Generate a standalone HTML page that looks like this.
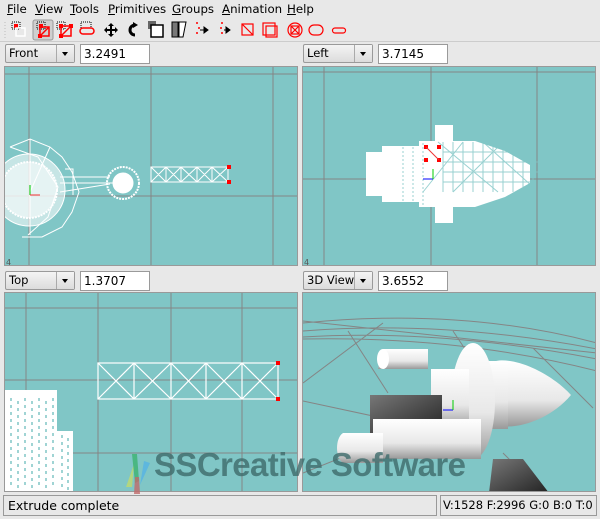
<!DOCTYPE html>
<html><head><style>
body{margin:0;width:600px;height:519px;background:#e8e8e8;font-family:"DejaVu Sans","Liberation Sans",sans-serif;font-size:12px;color:#000;position:relative;overflow:hidden}
.a{position:absolute}
.menu span{position:absolute;top:0;white-space:nowrap}
.combo{position:absolute;height:19px;border:1px solid #9a9a9a;border-radius:2px;background:linear-gradient(#f4f4f4,#dcdcdc);box-sizing:border-box;font-size:11.5px;line-height:17px;padding-left:3px;white-space:nowrap}
.combo b{position:absolute;right:0;top:0;width:17px;height:17px;border-left:1px solid #aaa;font-weight:normal;background:linear-gradient(#f4f4f4,#dcdcdc)}
.combo b:after{content:"";position:absolute;left:5px;top:7px;border:3px solid transparent;border-top:4px solid #000}
.field{position:absolute;height:20px;border:1px solid #9a9a9a;background:#fff;box-sizing:border-box;font-size:12px;line-height:18px;padding-left:3px}
.vp{position:absolute;background:#80c6c6;border:1px solid #999;box-sizing:border-box;overflow:hidden}
.vp svg{position:absolute;left:0;top:0}
</style></head><body>
<div class="a menu" style="left:0;top:2px;font-size:11.8px;width:400px;height:16px"><span style="left:7px"><u>F</u>ile</span><span style="left:35px"><u>V</u>iew</span><span style="left:70px"><u>T</u>ools</span><span style="left:108px"><u>P</u>rimitives</span><span style="left:172px"><u>G</u>roups</span><span style="left:222px"><u>A</u>nimation</span><span style="left:287px"><u>H</u>elp</span></div>
<svg class="a" style="left:0;top:18px" width="360" height="24">
<g stroke="#bbb"><line x1="5" y1="4" x2="5" y2="20" stroke-dasharray="1 2"/></g>
<rect x="33" y="2" width="20" height="20" fill="#cfcfcf" stroke="#999" rx="2"/>
<g fill="none" stroke="#000" stroke-dasharray="1 1"><rect x="12" y="4" width="8" height="7"/><rect x="37" y="4" width="8" height="7"/><rect x="57" y="4" width="8" height="7"/><rect x="81" y="4" width="10" height="6"/></g>
<g fill="red"><rect x="14" y="6" width="4" height="4"/><rect x="39" y="6" width="4" height="4"/><rect x="59" y="6" width="4" height="4"/></g>
<g fill="none" stroke="#fff" stroke-width="1.5"><rect x="16" y="10" width="9" height="8"/></g>
<g fill="none" stroke="red" stroke-width="1.5"><rect x="40" y="9" width="9" height="9"/><line x1="40" y1="18" x2="49" y2="9"/><rect x="61" y="8" width="10" height="10"/><line x1="61" y1="18" x2="71" y2="8"/><path d="M83 10 h8 a3 3 0 1 1 0 6 h-8 a3 3 0 1 1 0-6z"/></g>
<g fill="red"><rect x="38" y="16" width="4" height="4"/><rect x="59" y="16" width="4" height="4"/><rect x="69" y="6" width="4" height="4"/></g>
<path d="M111 5l3 3h-2v3h3v-2l3 3-3 3v-2h-3v3h2l-3 3-3-3h2v-3h-3v2l-3-3 3-3v2h3v-3h-2z" fill="#000"/>
<path d="M135 7a5 5 0 1 0 0 10" fill="none" stroke="#000" stroke-width="3"/><path d="M133 4l5 3-5 3z"/>
<rect x="148" y="3" width="8" height="8" fill="#666"/><rect x="151" y="7" width="12" height="12" fill="#fff" stroke="#000" stroke-width="1.5"/>
<rect x="172" y="4" width="6" height="15" fill="#777" stroke="#000"/><path d="M179 4h7l-3 15h-4z" fill="#fff" stroke="#000"/>
<g fill="red"><circle cx="197" cy="5" r="1"/><circle cx="199" cy="10" r="1"/><circle cx="197" cy="15" r="1"/><circle cx="222" cy="5" r="1"/><circle cx="221" cy="10" r="1"/><circle cx="222" cy="15" r="1"/></g>
<path d="M200 12h5M204 9l4 3-4 3z" stroke="#000"/><path d="M224 12h3M226 9l4 3-4 3z" stroke="#000"/>
<g fill="none" stroke="red" stroke-width="1.2"><rect x="242" y="6" width="11" height="11"/><line x1="242" y1="6" x2="253" y2="17"/><rect x="263" y="5" width="12" height="12"/><rect x="266" y="8" width="11" height="11"/><circle cx="295" cy="12" r="7"/><rect x="291" y="8" width="8" height="8"/><path d="M291 8l8 8M299 8l-8 8"/><rect x="309" y="7" width="14" height="10" rx="5"/><path d="M335 10h8a2 2 0 1 1 0 5h-8a2 2 0 1 1 0-5z"/></g>
</svg>
<div class="a" style="left:0;top:41px;width:600px;border-top:1px solid #ccc"></div>

<div class="combo" style="left:5px;top:44px;width:70px">Front<b></b></div>
<div class="field" style="left:80px;top:44px;width:70px">3.2491</div>
<div class="combo" style="left:303px;top:44px;width:70px">Left<b></b></div>
<div class="field" style="left:378px;top:44px;width:70px">3.7145</div>
<div class="combo" style="left:5px;top:271px;width:70px">Top<b></b></div>
<div class="field" style="left:80px;top:271px;width:70px">1.3707</div>
<div class="combo" style="left:303px;top:271px;width:70px">3D View<b></b></div>
<div class="field" style="left:378px;top:271px;width:70px">3.6552</div>

<div class="vp" style="left:4px;top:66px;width:294px;height:200px">
<svg width="294" height="200"><g stroke="#858585"><line x1="24" y1="0" x2="24" y2="200"/><line x1="146" y1="0" x2="146" y2="200"/><line x1="268" y1="0" x2="268" y2="200"/><line x1="0" y1="7" x2="294" y2="7"/><line x1="0" y1="129" x2="294" y2="129"/></g>
<g stroke="#fff" fill="none"><path d="M5 80l20-8 20 8 12 10 10 15 7 20-7 20-10 15-20 10h-20"/><path d="M5 80l28 10 20 30-10 30-20 18M25 72l0 96M45 80l-20 45"/><circle cx="24" cy="123" r="36" fill="#fff" fill-opacity=".55" stroke-width="1"/><circle cx="24" cy="123" r="28" fill="#fff" fill-opacity=".55" stroke-width="2" stroke-dasharray="2 1"/><path d="M55 110h50M55 116l55 0M55 125l50-8M60 102l8 0v26"/><circle cx="118" cy="116" r="16" stroke-width="2" stroke-dasharray="2 1"/><circle cx="118" cy="116" r="10" fill="#fff"/><rect x="146" y="100" width="77" height="15"/><path d="M146 100l15 15M161 100l-15 15M161 100l15 15M176 100l-15 15M176 100l16 15M192 100l-16 15M192 100l15 15M207 100l-15 15M207 100l16 15M223 100l-16 15M161 100v15M176 100v15M192 100v15M207 100v15"/></g>
<rect x="222" y="98" width="4" height="4" fill="red"/><rect x="222" y="113" width="4" height="4" fill="red"/>
<path d="M25 128v-10" stroke="#0c0"/><path d="M25 128h10" stroke="#e33"/>
<text x="1" y="198" font-size="8" fill="#555">4</text></svg></div>

<div class="vp" style="left:302px;top:66px;width:294px;height:200px">
<svg width="294" height="200"><g stroke="#858585"><line x1="21" y1="0" x2="21" y2="200"/><line x1="128" y1="0" x2="128" y2="200"/><line x1="234" y1="0" x2="234" y2="200"/><line x1="0" y1="5" x2="294" y2="5"/><line x1="0" y1="112" x2="294" y2="112"/></g>
<g fill="#fff"><path d="M63 85h16v-6h37v-5h16v-16h18v16h22l30 10 25 14v18l-25 14-30 10h-22v16h-18v-16h-16v-5h-37v-6h-16z"/></g>
<g stroke="#80c6c6" stroke-width="1" fill="none" opacity=".8"><path d="M140 75v50M150 75v50M160 75v50M170 75v50M180 75v50M190 75v50M200 75v50M210 75v50M220 75v45M230 80v40M140 85h90M140 95h95M140 105h95M140 115h90M135 75l60 50M160 75l-40 50M200 75l-50 50M180 75l50 45"/><path d="M100 60v80M110 60v80M120 60v80" stroke-dasharray="2 2"/></g>
<g fill="red"><rect x="121" y="78" width="4" height="4"/><rect x="134" y="78" width="4" height="4"/><rect x="121" y="91" width="4" height="4"/><rect x="134" y="91" width="4" height="4"/></g>
<path d="M123 80l13 13" stroke="#e33"/><path d="M130 112h-10" stroke="#00f"/><path d="M130 112v-10" stroke="#0c0"/>
<text x="1" y="198" font-size="8" fill="#555">4</text></svg></div>

<div class="vp" style="left:4px;top:292px;width:294px;height:200px">
<svg width="294" height="200"><g stroke="#858585"><line x1="21" y1="0" x2="21" y2="200"/><line x1="93" y1="0" x2="93" y2="200"/><line x1="166" y1="0" x2="166" y2="200"/><line x1="237" y1="0" x2="237" y2="200"/><line x1="0" y1="15" x2="294" y2="15"/><line x1="0" y1="87" x2="294" y2="87"/><line x1="0" y1="160" x2="294" y2="160"/></g>
<g stroke="#fff" fill="none" stroke-width="1.2"><rect x="93" y="70" width="180" height="36"/><path d="M129 70v36M166 70v36M201 70v36M237 70v36M93 70l36 36M129 70l-36 36M129 70l37 36M166 70l-37 36M166 70l35 36M201 70l-35 36M201 70l36 36M237 70l-36 36M237 70l36 36M273 70l-36 36"/></g>
<rect x="271" y="68" width="4" height="4" fill="red"/><rect x="271" y="104" width="4" height="4" fill="red"/>
<rect x="0" y="97" width="52" height="103" fill="#fff"/><rect x="52" y="138" width="16" height="62" fill="#fff"/>
<g stroke="#80c6c6" stroke-dasharray="3 4" stroke-width="1.5"><path d="M6 105v90M13 108v90M20 105v90M27 108v90M34 105v90M41 108v90M48 105v90M57 142v55M63 145v55"/></g>
</svg></div>

<div class="vp" style="left:302px;top:292px;width:294px;height:200px">
<svg width="294" height="200"><g stroke="#858585" fill="none"><path d="M0 30c100-10 200-5 294 20M0 38c100-8 200 0 294 18M0 44c100-6 200 4 294 22M0 46c100-2 200 8 294 32M0 28l294 32M80 30l-80 60M45 38l40 62M150 38l20 30M230 55l60 60M0 108l140 30M200 160l40 40M0 180l50-20"/></g>
<defs><linearGradient id="g" x1="0" y1="0" x2="0" y2="1"><stop offset="0" stop-color="#fff"/><stop offset=".6" stop-color="#e8e8e8"/><stop offset="1" stop-color="#999"/></linearGradient><linearGradient id="d" x1="0" y1="0" x2="1" y2="1"><stop offset="0" stop-color="#777"/><stop offset="1" stop-color="#222"/></linearGradient></defs>
<path d="M193 68c20-4 55 12 75 34-20 24-55 36-75 30z" fill="url(#g)"/>
<rect x="180" y="68" width="25" height="68" fill="url(#g)"/>
<ellipse cx="170" cy="108" rx="22" ry="58" fill="url(#g)"/>
<rect x="128" y="76" width="38" height="60" fill="url(#g)"/>
<path d="M80 56h45v20h-50z" fill="url(#g)"/><ellipse cx="80" cy="66" rx="6" ry="10" fill="#fff"/>
<path d="M67 102h72v40h-72z" fill="url(#d)"/>
<path d="M70 126h108v40h-108z" fill="url(#g)"/><path d="M40 140h40v30h-40c-8-5-8-25 0-30z" fill="url(#g)"/>
<path d="M190 166h30l26 34h-60z" fill="url(#d)"/>
<path d="M150 117h-10" stroke="#00f"/><path d="M150 117v-10" stroke="#0c0"/>
</svg></div>

<div class="a" style="left:122px;top:449px;width:40px;height:40px">
<svg width="40" height="45"><path d="M12 15l-8 23h6z" fill="#b7d778" opacity=".9"/><path d="M10 5l5 0 2 27-4 2z" fill="#3cb371" opacity=".8"/><path d="M22 12l6 2-10 22z" fill="#5ab5e0" opacity=".9"/><path d="M13 28l4 0 1 17h-6z" fill="#c06a6a" opacity=".8"/></svg></div>
<div class="a" style="left:154px;top:446px;font:bold 33px 'Liberation Sans',sans-serif;color:#3f6c6c;opacity:.8;letter-spacing:-0.6px;white-space:nowrap">SSCreative Software</div>

<div class="a" style="left:3px;top:495px;width:434px;height:21px;border:1px solid #999;box-sizing:border-box;font-size:12.5px;line-height:19px;padding-left:4px;background:#e8e8e8">Extrude complete</div>
<div class="a" style="left:440px;top:495px;width:157px;height:21px;border:1px solid #999;box-sizing:border-box;font-size:11.5px;line-height:19px;padding-left:2px;white-space:nowrap;overflow:hidden">V:1528 F:2996 G:0 B:0 T:0</div>
</body></html>
